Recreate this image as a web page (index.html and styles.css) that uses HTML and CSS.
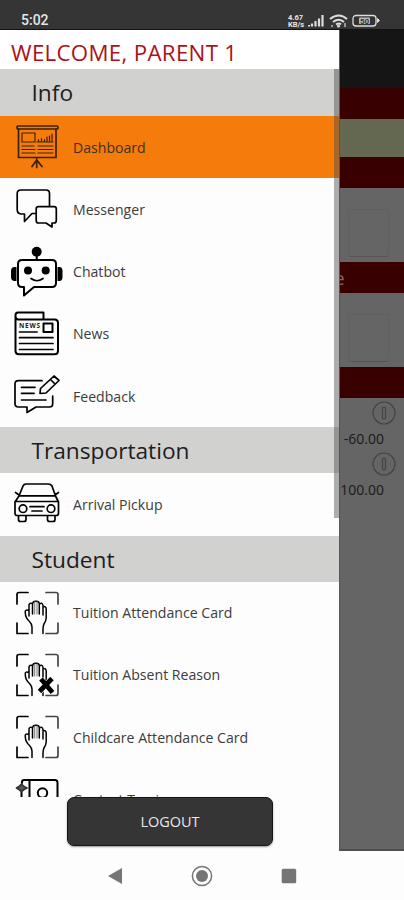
FILE: index.html
```
<!DOCTYPE html>
<html lang="en">
<head>
<meta charset="utf-8">
<title>Parent menu</title>
<link rel="stylesheet" href="styles.css">
</head>
<body>
<svg class="defs" aria-hidden="true">
  <symbol id="hand" viewBox="0 0 64 62">
    <g stroke-width="1.7"><path d="M17 22V12.500Q17 10.500 19 10.500H28M17 41V51.500H28"/><path d="M46 10.500H56Q58 10.500 58 12.500V22M46 51.500H56Q58 51.500 58 49.500V41" stroke="#444"/></g>
    <path d="M32 51.500V45Q32 42 29.500 39.500Q25.500 36 25.300 31V29Q25.500 27.500 29 28.500V34M29 31V23Q29.500 20.500 32.500 21.500V32M32.500 22Q33 18.800 36 19.200Q39 19 39.300 21.500V32M39.300 22Q42.500 20 43 23.500V33M43 24.500Q46 24 46.200 27V36Q46 39 44 42Q42.800 44 43 51.500" stroke-width="1.5"/>
    <path d="M34.700 20V32M37 20V32" stroke="#777" stroke-width="1"/>
  </symbol>
</svg>
<div class="phone">
  <header class="status">
    <span class="time">5:02</span>
    <span class="rate"><span>4.67</span><span>KB/s</span></span>
    <svg class="signals" width="96" height="16" viewBox="0 0 96 16">
      <path d="M1 12.500V11M4 12.500V9.500M7.500 12.500V7M11 12.500V4.500M14.500 12.500V1" stroke="#ddd" stroke-width="2.200"/>
      <g fill="none" stroke="#ddd" stroke-width="2.100"><path d="M22 5Q31 -2 39 5M25 8Q31 3.500 36 8M28 10.500Q31 8.500 33 10.500"/></g>
      <circle cx="30.500" cy="12" r="1.500" fill="#ddd"/><path d="M24 11v2M37 9v4" stroke="#bbb" stroke-width="1.500"/>
      <rect x="45" y="1.500" width="23" height="10.500" rx="3" fill="#333" stroke="#ddd" stroke-width="1.300"/>
      <rect x="51" y="3.500" width="11" height="6.500" rx="1" fill="#bbb"/><path d="M69.500 4.500L71.500 6.500L69.500 8.500Z" fill="#ddd" stroke="#ddd"/>
      <text x="52" y="9.500" class="battery">50</text>
    </svg>
  </header>
  <div class="screen">
    <aside class="drawer">
      <h1 class="welcome">WELCOME, PARENT 1</h1>
      <div class="list">
        <h2 class="section first">Info</h2>
        <div class="item active">
          <svg class="icon board" viewBox="0 0 64 62"><rect x="17" y="10" width="41" height="3" rx="1"/><path d="M18.500 13V41.500H56V13M36.700 42V51.500M36.700 44L32 50.500M36.700 44L42 50.500"/><rect x="22" y="17" width="13" height="9" stroke-width="1.200"/><path d="M37 26H53M38.500 26V23.500M41.500 26V22.500M44.500 26V23.500M47 26V21M49.500 26V20M52 26V18" stroke-width="1.200"/><path d="M22 30H34M38 30H53M22 33.500H35M38 33.500H53M22 37H35M38 37H53" stroke-width="1.100"/></svg>
          <span>Dashboard</span>
        </div>
        <div class="item">
          <svg class="icon" viewBox="0 0 64 62"><path d="M36 35.500H32L24.500 43.500V36H21Q17.200 35.500 17.200 31.500V15.500Q17.200 12 21 12H46Q49.500 12 49.500 15.500V28"/><path d="M38.500 28.700H54Q56.300 28.700 56.300 31V42.500Q56.300 45 54 45H52V49L46 45H38.500Q36.200 45 36.200 42.500V31Q36.200 28.700 38.500 28.700Z"/></svg>
          <span>Messenger</span>
        </div>
        <div class="item">
          <svg class="icon" viewBox="0 0 64 62"><path d="M36.700 12V19M22 19H52Q56 19 56 23V42Q56 46 52 46H34L24 54.500V46H22Q18 46 18 42V23Q18 19 22 19Z" stroke-width="2"/><path d="M31 37.500Q37 42 43 37.500"/><g fill="#000" stroke="none"><circle cx="36.700" cy="10.700" r="5"/><circle cx="28" cy="29.500" r="4"/><circle cx="45.700" cy="29.500" r="4"/><path d="M16.500 26V40H14Q11 39.500 11 36V30Q11 26.500 14 26ZM57.500 26V40H60Q62.500 39.500 62.500 36V30Q62.500 26.500 60 26Z"/></g></svg>
          <span>Chatbot</span>
        </div>
        <div class="item">
          <svg class="icon" viewBox="0 0 64 62"><path d="M43.500 16.400V9.500H18Q15.500 9.500 15.500 12V48Q15.500 51.200 19 51.200H54.500Q58 51.200 58 48V20Q58 16.500 54.500 16.500H18Q15.500 16 15.500 13" stroke-width="2"/><rect x="43.500" y="20.500" width="9" height="8.500" stroke-width="2"/><path d="M19.500 29H37M19.500 34.700H53M19.500 40.500H53M19.500 46.500H53"/><text x="19" y="25" textLength="21" class="news">NEWS</text></svg>
          <span>News</span>
        </div>
        <div class="item">
          <svg class="icon" viewBox="0 0 64 62"><path d="M42 15.700H18.500Q15 15.700 15 19V38.500Q15 42 18.500 42H27V47.500L36 42H49.500Q52.700 42 52.700 38.500V31"/><path d="M21.500 22.300H35M21.500 28.400H34M21.500 35H46M54 11L59 15.500L46 28L40 28.500L40.500 23.500ZM50.500 14.500L55 19"/></svg>
          <span>Feedback</span>
        </div>
        <h2 class="section">Transportation</h2>
        <div class="item">
          <svg class="icon" viewBox="0 0 64 62"><path d="M15 29L19 23L23 13Q24 11 26 11H48Q51 11 52 13L55.500 23L58.500 29V40Q58.500 42.500 56.500 42.500H17Q15 42.500 15 40ZM15 28.500H58M19 22.800H55M18.500 43V46.500Q18.500 48.500 20.500 48.500H24Q26 48.500 26 46.500V43M47.500 43V46.500Q47.500 48.500 49.500 48.500H53Q55 48.500 55 46.500V43M19 22L15.500 19.500M55 22L58.500 19.500M30 33.700H44M32 38H42"/><circle cx="23" cy="35.700" r="3.800"/><circle cx="51" cy="35.700" r="3.800"/></svg>
          <span>Arrival Pickup</span>
        </div>
        <h2 class="section">Student</h2>
        <div class="item"><svg class="icon" viewBox="0 0 64 62"><use href="#hand"/></svg><span>Tuition Attendance Card</span></div>
        <div class="item"><svg class="icon" viewBox="0 0 64 62"><use href="#hand"/><path d="M38 48L54 34" stroke="#fff" stroke-width="7"/><path d="M39.500 47.500L52 34.500M41 35L52.500 48.500" stroke-width="4.800" stroke-linecap="butt"/></svg><span>Tuition Absent Reason</span></div>
        <div class="item"><svg class="icon" viewBox="0 0 64 62"><use href="#hand"/></svg><span>Childcare Attendance Card</span></div>
        <div class="item"><svg class="icon" viewBox="0 0 64 62"><path d="M29.500 40V12M22 15V14Q22 12 24 12H55Q57.500 12 57.500 14.500V45M21.500 24V34" stroke-width="2"/><circle cx="42.500" cy="25" r="4.700" stroke-width="2"/><path d="M16.500 20L19 18.500L21.500 16L24 18.500L27 20L24 21.500L21.500 23.500L19 21.500Z" fill="#555" stroke="#333"/></svg><span class="low">Contact Tracing</span></div>
        <div class="scrollbar"></div>
      </div>
      <button class="logout">LOGOUT</button>
    </aside>
    <main class="page">
      <div class="appbar"></div>
      <div class="band"></div>
      <div class="notice"></div>
      <div class="band"></div>
      <div class="panel"><div class="card"></div></div>
      <div class="band title">e</div>
      <div class="panel"><div class="card"></div></div>
      <div class="band"></div>
      <div class="amounts">
        <svg class="info" viewBox="0 0 24 24"><circle cx="12" cy="12" r="11"/><rect x="10.500" y="6" width="3" height="12" rx="1.500"/></svg>
        <span class="amount">-60.00</span>
        <svg class="info" viewBox="0 0 24 24"><circle cx="12" cy="12" r="11"/><rect x="10.500" y="6" width="3" height="12" rx="1.500"/></svg>
        <span class="amount">100.00</span>
      </div>
    </main>
  </div>
  <nav class="nav">
    <svg width="16" height="18" viewBox="0 0 16 18"><path d="M0 9L14 1V17Z" fill="#757575"/></svg>
    <svg width="22" height="22" viewBox="0 0 22 22"><circle cx="11" cy="11" r="9.600" fill="none" stroke="#757575" stroke-width="1.500"/><circle cx="11" cy="11" r="6" fill="#757575"/></svg>
    <svg width="16" height="16" viewBox="0 0 16 16"><rect x=".7" y=".7" width="14.500" height="14.500" rx="1.500" fill="#757575"/></svg>
  </nav>
</div>
</body>
</html>
```
FILE: styles.css
```
* { box-sizing: border-box; }
body { margin: 0; font-family: "Open Sans", "Noto Sans", sans-serif; }
.defs { display: none; }
.phone { width: 404px; height: 900px; display: flex; flex-direction: column; background: #fdfdfd; overflow: hidden; }
.status { height: 30px; flex: none; background: #353535; border-bottom: 1px solid #111; display: flex; align-items: flex-start; color: #e6e6e6; }
.time { margin: 11px 0 0 21px; width: 267px; font: 500 14px/18px Roboto, sans-serif; }
.rate { display: flex; flex-direction: column; width: 20px; margin-top: 14px; font: 700 7.500px/7px Roboto, sans-serif; }
.signals { margin-top: 14px; }
.battery { font: 700 8px Roboto, sans-serif; fill: #333; }
.screen { height: 821px; flex: none; display: flex; }
.drawer { width: 339px; background: #fdfdfd; display: flex; flex-direction: column; }
.welcome { margin: 0; height: 39px; flex: none; padding-left: 11px; font-size: 22.3px; letter-spacing: .3px; line-height: 45px; font-weight: 400; color: #ad1118; white-space: nowrap; background: #fff; }
.list { height: 728px; flex: none; overflow: hidden; position: relative; }
.section { margin: 0; height: 46px; padding-left: 31.500px; background: #d1d1d0; color: #1d1d1d; font-size: 22.7px; line-height: 48px; font-weight: 400; }
.first { height: 47px; }
.item { height: 62.25px; display: flex; align-items: center; font-size: 14.1px; color: #3c3c3c; white-space: nowrap; }
.active { background: #f57c0a; color: #40301a; }
.icon { width: 64px; height: 62px; flex: none; margin-right: 9px; fill: none; stroke: #000; stroke-width: 1.700; stroke-linejoin: round; stroke-linecap: round; }
.board { stroke: #3b2204; }
.low { padding-top: 1px; }
.news { font: 700 6.500px "Open Sans", sans-serif; fill: #222; stroke: none; }
.scrollbar { position: absolute; right: 0; top: 0; width: 5px; height: 449px; background: rgba(75, 75, 75, .45); }
.logout { width: 206px; height: 49px; margin: 0 0 0 67px; flex: none; border: 1px solid #161616; border-radius: 7px; background: #353535; color: #e8e8e8; font: 500 14.5px "Open Sans", sans-serif; box-shadow: 0 1px 2px rgba(0, 0, 0, .4); }
.page { width: 65px; background: #656565; border-left: 1px solid #555; border-bottom: 2px solid #505050; display: flex; flex-direction: column; }
.appbar { height: 58px; background: #151515; }
.band { height: 31px; background: #390000; flex: none; }
.notice { height: 38px; background: #646851; }
.panel { height: 74px; padding: 21px 15px 5px 8px; }
.panel + .band { height: 31px; }
.card { height: 100%; border: 1px solid #606060; border-bottom-color: #555; border-radius: 3px; }
.title { color: #806868; font-size: 19px; line-height: 33px; text-indent: -6px; overflow: hidden; }
.amounts { display: flex; flex-direction: column; align-items: flex-end; padding: 3px 8px 0 0; }
.info { width: 24px; height: 24px; fill: none; stroke: #444; stroke-width: 1.200; flex: none; }
.amount { height: 27px; padding-right: 12px; font-size: 14px; line-height: 27px; color: #1a1a1a; }
.nav { height: 49px; display: flex; align-items: center; padding: 1px 0 0 108px; }
.nav svg + svg { margin-left: 67px; }
.nav svg + svg + svg { margin-left: 68px; }
```
